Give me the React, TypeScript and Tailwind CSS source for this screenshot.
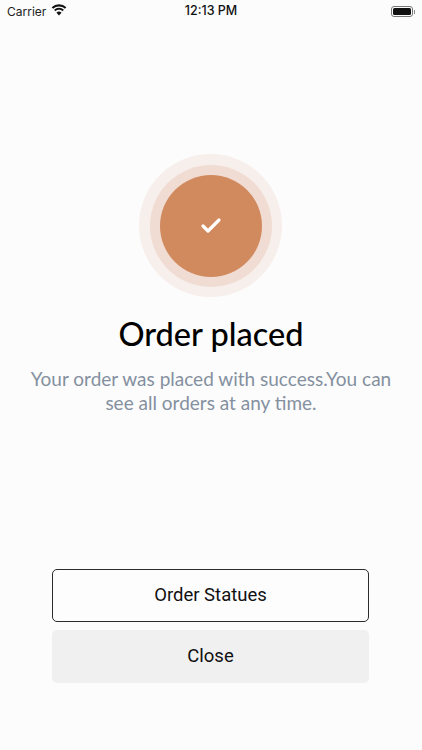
import { Check } from 'lucide-react';

function StatusBar() {
  return (
    <div className="relative flex h-[22px] items-center justify-between pl-[7px] pr-[7px] pt-[1px] font-['Inter',sans-serif] text-[12px] text-[#111]">
      <div className="flex items-center gap-[5px]">
        <span className="text-[#222]">Carrier</span>
        <svg width="16" height="12" viewBox="0 0 15 11" className="-mt-[3px]">
          <path d="M7.5 2.2c2.1 0 4 .8 5.5 2.2l1.4-1.4A9.9 9.9 0 0 0 7.5.2 9.9 9.9 0 0 0 .6 3l1.4 1.4a8 8 0 0 1 5.5-2.2z" fill="#111" />
          <path d="M7.5 5.3c1.2 0 2.4.5 3.3 1.3l1.3-1.4a6.8 6.8 0 0 0-9.2 0l1.3 1.4c.9-.8 2.1-1.3 3.3-1.3z" fill="#111" />
          <path d="M7.5 10.6l2.4-2.6a3.4 3.4 0 0 0-4.8 0z" fill="#111" />
        </svg>
      </div>
      <span className="absolute left-0 right-0 text-center text-[12.5px] font-medium">12:13 PM</span>
      <div className="flex items-center gap-[1px]">
        <div className="h-[11px] w-[22px] rounded-[3px] border border-[#777] p-[1px]">
          <div className="h-full w-full rounded-[1.5px] bg-[#111]" />
        </div>
        <div className="h-[4px] w-[1px] bg-[#888]" />
      </div>
    </div>
  );
}

export default function App() {
  return (
    <div className="flex h-[750px] w-[422px] flex-col overflow-hidden bg-[#fcfcfc]">
      <StatusBar />

      <div className="mt-[132px] flex flex-col items-center">
        <div className="mr-[1px] flex h-[143px] w-[143px] items-center justify-center rounded-full bg-[#f7efeb]">
          <div className="flex h-[122px] w-[122px] items-center justify-center rounded-full bg-[#f0dcd2]">
            <div className="flex h-[102px] w-[102px] items-center justify-center rounded-full bg-[#d1895e]">
              <Check size={24} strokeWidth={3.2} className="text-white" />
            </div>
          </div>
        </div>

        <h1 className="mt-[17px] font-['Lato',sans-serif] text-[32.5px] leading-[40px] font-medium text-black">
          Order placed
        </h1>
        <p className="mt-[13px] w-[380px] text-center font-['Lato',sans-serif] text-[19px] leading-[24px] text-[#84909f]">
          Your order was placed with success.You can see all orders at any time.
        </p>
      </div>

      <div className="mt-[154px] ml-[52px] flex w-[317px] flex-col gap-[8px] font-['Roboto',sans-serif] text-[18.5px] text-[#111]">
        <button type="button" className="h-[53px] rounded-[5px] border-[1.5px] border-[#2b2b2b] bg-[#fdfdfd]">
          Order Statues
        </button>
        <button type="button" className="h-[53px] rounded-[5px] bg-[#f0f0f0]">
          Close
        </button>
      </div>
    </div>
  );
}
